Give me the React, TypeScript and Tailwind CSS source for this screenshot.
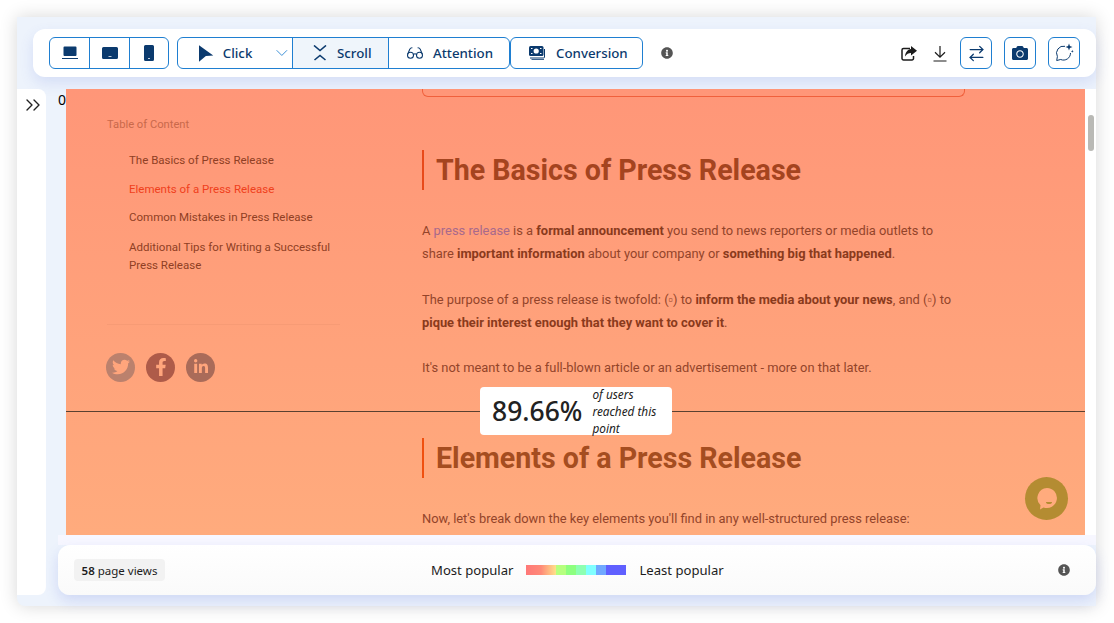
import { ChevronDown, ChevronsRight, Glasses, ArrowRightLeft } from 'lucide-react';
import { FaTwitter, FaFacebookF, FaLinkedinIn, FaCamera, FaInfoCircle } from 'react-icons/fa';

const tocItems = [
  { label: 'The Basics of Press Release', active: true },
  { label: 'Elements of a Press Release', active: false },
  { label: 'Common Mistakes in Press Release', active: true },
];

const legend = ['bg-[#b6ff7f]', 'bg-[#8dff7f]', 'bg-[#8dffb2]', 'bg-[#80ffff]', 'bg-[#70a8ff]'];

function DeviceButtons() {
  return (
    <div className="flex h-8 w-[120px] rounded-md border border-[#1f7fd1]">
      <div className="flex w-10 items-center justify-center border-r border-[#1f7fd1]">
        <svg width="16" height="14" viewBox="0 0 16 14" fill="#0b3a6e">
          <path d="M1.5 1.5a1 1 0 0 1 1-1h11a1 1 0 0 1 1 1V9a1 1 0 0 1-1 1h-11a1 1 0 0 1-1-1z" />
          <rect x="0" y="12" width="16" height="1" />
        </svg>
      </div>
      <div className="flex w-10 items-center justify-center border-r border-[#1f7fd1]">
        <svg width="16" height="12" viewBox="0 0 16 12" fill="#0b3a6e">
          <path fillRule="evenodd" d="M1.5 0h13A1.5 1.5 0 0 1 16 1.5v9a1.5 1.5 0 0 1-1.5 1.5h-13A1.5 1.5 0 0 1 0 10.5v-9A1.5 1.5 0 0 1 1.5 0zM6.5 9v.8h3V9z" />
        </svg>
      </div>
      <div className="flex flex-1 items-center justify-center">
        <svg width="10" height="16" viewBox="0 0 10 16" fill="#0b3a6e">
          <path fillRule="evenodd" d="M1.5 0h7A1.5 1.5 0 0 1 10 1.5v13A1.5 1.5 0 0 1 8.5 16h-7A1.5 1.5 0 0 1 0 14.5v-13A1.5 1.5 0 0 1 1.5 0zM4 13v.8h2V13z" />
        </svg>
      </div>
    </div>
  );
}

function ModeButtons() {
  return (
    <div className="ml-2 flex h-8 text-[13.3px] font-medium text-[#0b3a6e]">
      <div className="flex w-[116px] items-center rounded-l-md border border-[#1f7fd1] pl-[21px]">
        <svg width="15" height="17" viewBox="0 0 15 17" fill="#0b3a6e">
          <path d="M0 0 14.5 10.5 7 11 0 17z" />
        </svg>
        <span className="ml-[9px] pt-px">Click</span>
        <ChevronDown className="ml-[20px] h-5 w-5 text-[#3b8fd6]" strokeWidth={1.2} />
      </div>
      <div className="-ml-px flex w-[97px] items-center border border-[#1f7fd1] bg-[#eff5fb] pl-5">
        <svg width="14" height="16" viewBox="0 0 14 16" fill="none" stroke="#0b3a6e" strokeWidth="1.6">
          <path d="M1 .5 7 5.5l6-5M1.5 15 7 10.500l5.500 4.500" />
        </svg>
        <span className="ml-[10px] pt-px">Scroll</span>
      </div>
      <div className="-ml-px flex w-[122px] items-center rounded-r-md border border-[#1f7fd1] pl-[17px]">
        <Glasses className="h-[18px] w-[18px]" strokeWidth={1.4} />
        <span className="ml-[9px] pt-px">Attention</span>
      </div>
      <div className="flex w-[133px] items-center rounded-md border border-[#1f7fd1] pl-[18px]">
        <svg width="16" height="14" viewBox="0 0 16 14">
          <rect x="0" y="0" width="14.5" height="10" rx="1.5" fill="#0b3a6e" />
          <circle cx="7.2" cy="5" r="2.6" fill="#fff" />
          <path d="M2 2.5h1.5M2 7.5h1.500M11 2.5h1.500M11 7.5h1.500" stroke="#fff" strokeWidth="1" />
          <path d="M1 12h13.5a1 1 0 0 0 1-1V3" fill="none" stroke="#0b3a6e" strokeWidth="1" />
          <path d="M2.5 13.500H15" stroke="#0b3a6e" strokeWidth="0.8" />
        </svg>
        <span className="ml-[11px] pt-px">Conversion</span>
      </div>
    </div>
  );
}

function ToolButtons() {
  return (
    <div className="ml-auto flex items-center text-[#0b3a6e]">
      <svg width="16" height="15" viewBox="0 0 16 15">
        <path d="M9 2.5H2.500a1.500 1.500 0 0 0-1.500 1.500v8.500A1.500 1.500 0 0 0 2.500 14H11a1.500 1.500 0 0 0 1.500-1.500V10" fill="none" stroke="#1c1c1c" strokeWidth="1.5" />
        <path d="M10 0l6 4.800-6 4.700V7C7.500 7 5.500 8 4 10.500 4.300 6.500 6.500 3.500 10 3z" fill="#1c1c1c" />
      </svg>
      <svg className="ml-[16px]" width="14" height="17" viewBox="0 0 14 17" fill="none" stroke="#1c1c1c" strokeWidth="1.2">
        <path d="M7 1v11M2 7.300 7 12.200l5-4.900M.5 16h13" />
      </svg>
      <div className="ml-[13px] flex h-8 w-8 items-center justify-center rounded-md border border-[#1f7fd1]">
        <ArrowRightLeft className="h-[19px] w-[19px]" strokeWidth={1.6} />
      </div>
      <div className="ml-3 flex h-8 w-8 items-center justify-center rounded-md border border-[#1f7fd1]">
        <FaCamera className="h-4 w-4" />
      </div>
      <div className="ml-3 flex h-8 w-8 items-center justify-center rounded-md border border-[#1f7fd1]">
        <svg width="20" height="20" viewBox="0 0 20 20" fill="none" stroke="#0b3a6e" strokeWidth="1">
          <path d="M11 3.300A7 7 0 0 0 3.400 13.500L2.700 17.500l4-1A7 7 0 0 0 16.500 10" />
          <path d="M15 .5l.9 2.600 2.600.9-2.600.9-.9 2.600-.9-2.600-2.600-.9 2.600-.9zM18.300 6.800l.4 1.100 1.100.4-1.100.4-.4 1.100-.4-1.100-1.100-.4 1.100-.4z" fill="#0b3a6e" stroke="none" />
        </svg>
      </div>
    </div>
  );
}

function TableOfContent() {
  return (
    <div className="w-[356px] shrink-0 pl-[41px] pr-[16px] text-[11.5px]">
      <div className="mt-[28px] text-[11.2px] leading-4 text-[#c9694b]">Table of Content</div>
      <div className="mt-[19px] pl-[22px] text-[#8f3f24]">
        {tocItems.map((item) => (
          <div key={item.label} className={item.active ? 'h-[28.6px] leading-4' : 'h-[28.6px] leading-4 text-[#f0401c]'}>
            {item.label}
          </div>
        ))}
        <div className="leading-[18px]">
          Additional Tips for Writing a Successful
          <br />
          Press Release
        </div>
      </div>
      <div className="mt-[50px] h-px w-[233px] bg-[#f79b75]" />
      <div className="-ml-px mt-[28px] flex gap-[11px] text-[#ffa57c]">
        <div className="flex h-[29px] w-[29px] items-center justify-center rounded-full bg-[#bb816d]">
          <FaTwitter className="h-[18px] w-[18px]" />
        </div>
        <div className="flex h-[29px] w-[29px] items-center justify-center rounded-full bg-[#ae5b49]">
          <FaFacebookF className="h-[18px] w-[18px]" />
        </div>
        <div className="flex h-[29px] w-[29px] items-center justify-center rounded-full bg-[#aa6b59]">
          <FaLinkedinIn className="h-[16px] w-[16px]" />
        </div>
      </div>
    </div>
  );
}

function Article() {
  return (
    <div className="w-[543px] text-[12.88px] leading-[23px] text-[#93442a]">
      <div className="h-2 rounded-b-md border border-t-0 border-[#f0603c]" />
      <h2 className="mt-[53px] flex h-10 items-center border-l-2 border-[#e84a1a] pl-3 text-[28.6px] font-bold text-[#a5441f]">
        The Basics of Press Release
      </h2>
      <p className="mt-[29px]">
        A <span className="text-[#a8698c]">press release</span> is a <b className="text-[#8a3a1c]">formal announcement</b> you send to news reporters or media outlets to share{' '}
        <b className="text-[#8a3a1c]">important information</b> about your company or <b className="text-[#8a3a1c]">something big that happened</b>.
      </p>
      <p className="mt-[23px]">
        The purpose of a press release is twofold: (▫) to <b className="text-[#8a3a1c]">inform the media about your news</b>, and (▫) to{' '}
        <b className="text-[#8a3a1c]">pique their interest enough that they want to cover it</b>.
      </p>
      <p className="mt-[22px]">It's not meant to be a full-blown article or an advertisement - more on that later.</p>
      <h2 className="mt-[59px] flex h-10 items-center border-l-2 border-[#f0500f] pl-3 text-[28.6px] font-bold text-[#a54d20]">
        Elements of a Press Release
      </h2>
      <p className="mt-[29px]">Now, let's break down the key elements you'll find in any well-structured press release:</p>
    </div>
  );
}

export default function App() {
  return (
    <div className="h-[623px] w-[1114px] overflow-hidden bg-white pl-[17px] pt-[17px] font-['Noto_Sans',sans-serif]">
      <div className="flex h-[589px] w-[1079px] flex-col rounded-bl-lg bg-[#edf3fc] shadow-[0_0_18px_rgba(0,0,0,0.16)]">
        <div className="ml-4 mt-3 flex h-12 items-center rounded-xl bg-white pl-4 pr-4 shadow-[0_6px_14px_rgba(90,110,220,0.16)]">
          <DeviceButtons />
          <ModeButtons />
          <FaInfoCircle className="ml-[18px] h-3 w-3 text-[#555]" />
          <ToolButtons />
        </div>
        <div className="mt-3 flex h-[506px]">
          <div className="w-[29px] rounded-r-lg bg-white pl-[3.5px] pt-[4px]">
            <ChevronsRight className="h-6 w-6 text-[#222]" strokeWidth={1.4} />
          </div>
          <div className="ml-3 flex w-[1038px] flex-col">
            <div className="flex h-[446px]">
              <div className="w-2 text-[14px] leading-[22px] text-black">0</div>
              <div className="relative h-[446px] w-[1019px] overflow-hidden bg-gradient-to-b from-[#ff9678] to-[#ffab7d] font-['Roboto',sans-serif]">
                <div className="flex">
                  <TableOfContent />
                  <Article />
                </div>
                <div className="absolute left-0 right-0 top-[322px] h-px bg-[#5a4030]" />
                <div className="absolute left-[414px] top-[298px] flex h-12 w-[192px] items-center rounded bg-white pl-3 font-['Noto_Sans',sans-serif] text-[#222]">
                  <span className="text-[26.5px] font-medium leading-none">89.66%</span>
                  <span className="ml-[10px] text-[11.8px] italic leading-[17px]">
                    of users
                    <br />
                    reached this
                    <br />
                    point
                  </span>
                </div>
                <div className="absolute left-[959px] top-[388px] flex h-[43px] w-[43px] items-center justify-center rounded-full bg-[#b48c32]">
                  <svg width="22" height="24" viewBox="0 0 22 24" fill="#ffab7d">
                    <path d="M11 1a10 10 0 1 1-3.500 19.400L4 22.500l.5-4.300A10 10 0 0 1 11 1z" />
                    <path d="M10 15h6a3 2 0 0 1-6 0z" fill="#b48c32" />
                  </svg>
                </div>
              </div>
              <div className="w-[11px] bg-white pl-[3px] pt-[26px]">
                <div className="h-[36px] w-[6px] rounded-full bg-[#b9b9b5]" />
              </div>
            </div>
            <div className="h-[10px] bg-[#f7f7ff]" />
            <div className="flex h-[50px] items-center rounded-xl bg-gradient-to-b from-white to-[#fafafa] pl-4 pr-[26px] text-[13.1px] text-[#1c1c1c] shadow-[0_6px_14px_rgba(90,110,220,0.2)]">
              <div className="flex h-[22px] w-[91px] items-center justify-center rounded bg-[#f2f2f2] pt-[2px] text-[11.5px]">
                <b className="font-semibold">58</b>&nbsp;page views
              </div>
              <span className="ml-[266px] pt-px">Most popular</span>
              <div className="ml-[13px] flex h-[10px] w-[100px]">
                <div className="w-[30px] bg-gradient-to-r from-[#ff7878] via-[#ff8a78] to-[#ffe08a]" />
                {legend.map((color) => (
                  <div key={color} className={`w-[10px] ${color}`} />
                ))}
                <div className="w-[20px] bg-[#6060ff]" />
              </div>
              <span className="ml-[13px] pt-px">Least popular</span>
              <FaInfoCircle className="ml-auto h-3 w-3 text-[#555]" />
            </div>
          </div>
        </div>
      </div>
    </div>
  );
}
